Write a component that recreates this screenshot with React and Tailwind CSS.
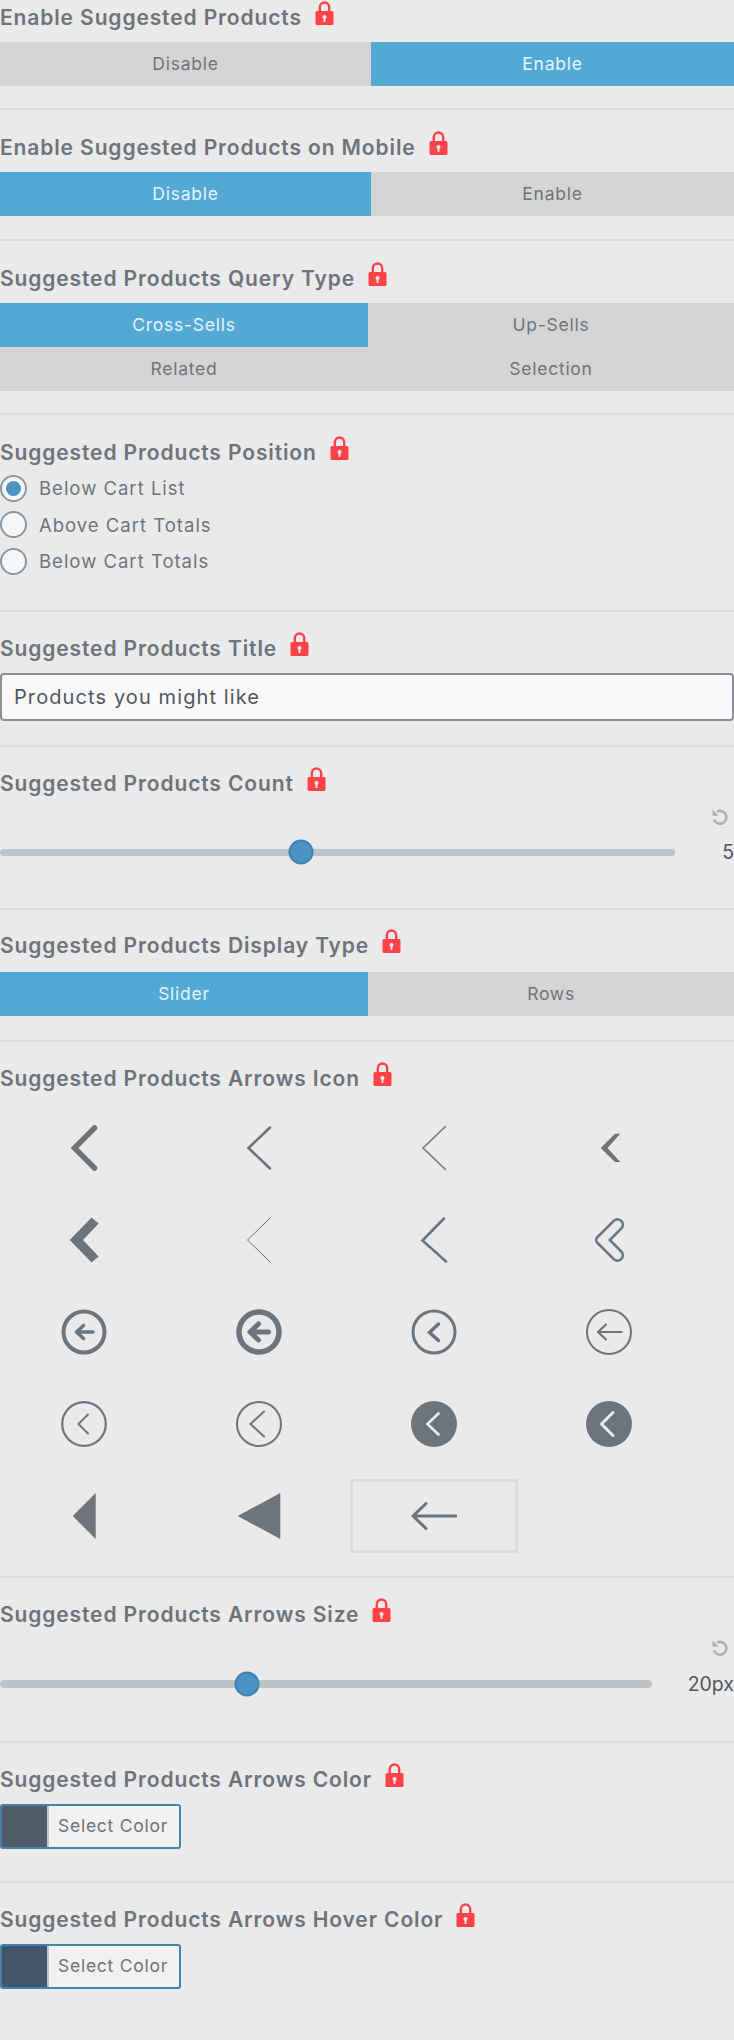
import React from 'react';

const iconColor = '#6d747b';

function Lock() {
  return (
    <svg width="19" height="24" viewBox="0 0 19 24" className="-mt-[5px] ml-[13px] shrink-0">
      <path d="M4.8 11V6.2a4.7 4.7 0 0 1 9.4 0V11" fill="none" stroke="#ff4248" strokeWidth="2.4" />
      <rect x="0.5" y="10" width="18" height="14" rx="1.5" fill="#ff4248" />
      <circle cx="9.5" cy="16" r="2" fill="#eaeaea" />
      <rect x="8.6" y="16" width="1.8" height="5" fill="#eaeaea" />
    </svg>
  );
}

function Title({ children, className = 'mb-3' }) {
  return (
    <div className={`flex items-start h-6 ${className}`}>
      <h3 className="text-[21px] leading-6 font-semibold tracking-[0.88px] text-[#6d747b] whitespace-nowrap">{children}</h3>
      <Lock />
    </div>
  );
}

function Segments({ options, active, cols = 'grid-cols-[371px_1fr]' }) {
  return (
    <div className={`grid ${cols}`}>
      {options.map((o) => (
        <div
          key={o}
          className={`h-11 pt-[1px] flex items-center justify-center text-[17.5px] tracking-[0.75px] ${
            o === active ? 'bg-[#53a8d4] text-[#e6f4fa]' : 'bg-[#d4d4d4] text-[#6d747b]'
          }`}
        >
          {o}
        </div>
      ))}
    </div>
  );
}

function Radio({ label, checked }) {
  return (
    <div className="flex items-center h-[36.5px]">
      <span className="w-[27px] h-[27px] rounded-full border-2 border-[#8c969e] bg-[#f6f6f6] flex items-center justify-center shrink-0">
        {checked && <span className="w-[15px] h-[15px] rounded-full bg-[#4b93c3]" />}
      </span>
      <span className="ml-[12px] pt-[2px] text-[18.5px] tracking-[1px] text-[#6d747b]">{label}</span>
    </div>
  );
}

function ResetIcon() {
  return (
    <svg width="16" height="16" viewBox="0 0 16 16" fill="none">
      <path d="M5 2.6 A6.4 6.4 0 1 1 1.9 10.4" stroke="#b0b0b0" strokeWidth="2.6" />
      <polygon points="0.5,0.5 0.5,6.8 6.8,6.8" fill="#b0b0b0" />
    </svg>
  );
}

function Slider({ trackWidth, thumbLeft, value, trackClass, gapClass }) {
  return (
    <div>
      <div className="flex justify-end h-4 pr-[6px]">
        <ResetIcon />
      </div>
      <div className={`flex items-center justify-between h-7 ${gapClass}`}>
        <div className={`relative rounded-full bg-[#bdc3c7] ${trackClass}`} style={{ width: trackWidth }}>
          <span
            className="absolute top-1/2 -translate-y-1/2 -translate-x-1/2 w-[25px] h-[25px] rounded-full bg-[#4b93c3] border-2 border-[#3f83b3]"
            style={{ left: thumbLeft }}
          />
        </div>
        <span className="text-[19.5px] text-[#50575e] translate-y-[1px]">{value}</span>
      </div>
    </div>
  );
}

function ColorButton({ swatch }) {
  return (
    <div className="flex w-[181px] h-[45px] rounded-[3px] border-2 border-[#4682ab] bg-[#f1f1f1] overflow-hidden">
      <span className={`w-[45px] border-r-2 border-[#c3c4c7] box-content ${swatch}`} />
      <span className="ml-[9px] self-center text-[17.5px] tracking-[0.75px] text-[#6d747b] whitespace-nowrap">Select Color</span>
    </div>
  );
}

function Svg({ children }) {
  return (
    <svg width="46" height="46" viewBox="0 0 46 46" fill="none" stroke={iconColor} strokeLinecap="round" strokeLinejoin="miter">
      {children}
    </svg>
  );
}

const arrowIcons = [
  <path d="M33.5 3 L13.5 23 L33.5 43" strokeWidth="5.5" />,
  <path d="M34 2.5 L12.5 23 L34 43.5" strokeWidth="2.6" />,
  <path d="M34.5 1.5 L12 23 L34.5 44.5" strokeWidth="1.5" />,
  <polygon points="14.7,23 29,8.7 34.3,8.7 21.5,23 34.3,37 29,37" fill={iconColor} stroke="none" />,
  <polygon points="8.7,23 30.5,0.5 37.7,6.5 22,23 37.7,39.5 30.5,45.5" fill={iconColor} stroke="none" />,
  <path d="M34.7 0.5 L11.5 23 L34.7 45.5" strokeWidth="1" strokeLinecap="butt" />,
  <path d="M33 1.5 L11.5 23.5 L35 44.5" strokeWidth="2.6" />,
  <path d="M11.5 20 L28 3.6 a5.4 5.4 0 0 1 7.6 7.6 L23.8 23 L35.6 34.8 a5.4 5.4 0 0 1 -7.6 7.6 L11.5 26 a4.2 4.2 0 0 1 0 -6 Z" strokeWidth="2.5" />,
  <>
    <circle cx="23" cy="23" r="20.5" strokeWidth="4" />
    <path d="M32 23 H16 M22.5 16.5 L15.5 23 L22.5 29.5" strokeWidth="3.5" strokeLinejoin="round" />
  </>,
  <>
    <circle cx="23" cy="23" r="20" strokeWidth="5.5" />
    <path d="M32.5 23 H15 M22.5 15 L14 23 L22.5 31" strokeWidth="5" strokeLinejoin="round" />
  </>,
  <>
    <circle cx="23" cy="23" r="21" strokeWidth="3" />
    <path d="M27.5 15 L18.5 23.5 L27.5 31.5" strokeWidth="3.5" />
  </>,
  <>
    <circle cx="23" cy="23" r="22" strokeWidth="2" />
    <path d="M35.5 23 H12 M20 15.5 L12 23 L20 30.5" strokeWidth="2.2" strokeLinejoin="round" />
  </>,
  <>
    <circle cx="23" cy="23" r="21.8" strokeWidth="2.2" />
    <path d="M27 13.5 L17.5 23 L27 32.5" strokeWidth="2" />
  </>,
  <>
    <circle cx="23" cy="23" r="22" strokeWidth="2" />
    <path d="M28 10.5 L14.5 23 L28 35.5" strokeWidth="2" />
  </>,
  <>
    <circle cx="23" cy="23" r="23" fill={iconColor} stroke="none" />
    <path d="M27.5 12.5 L16.5 23 L27.5 33.5" stroke="#eaeaea" strokeWidth="2.6" />
  </>,
  <>
    <circle cx="23" cy="23" r="23" fill={iconColor} stroke="none" />
    <path d="M27 11.5 L15.5 23 L27 34.5" stroke="#eaeaea" strokeWidth="3" />
  </>,
  <polygon points="11.7,23 34.7,0 34.7,46" fill={iconColor} stroke="none" />,
  <polygon points="1.7,23 44.3,0 44.3,46" fill={iconColor} stroke="none" />,
  <path d="M45 23 H2 M15 10.5 L2 23 L15 35.5" strokeWidth="3" strokeLinejoin="round" />,
];

function ArrowGrid() {
  return (
    <div className="grid grid-cols-[repeat(4,168px)] gap-x-[7px] gap-y-[18px]">
      {arrowIcons.map((icon, i) => (
        <div
          key={i}
          className={`h-[74px] flex items-center justify-center ${i === 18 ? 'border-[3px] border-[#dddddd]' : ''}`}
        >
          <Svg>{icon}</Svg>
        </div>
      ))}
    </div>
  );
}

export default function App() {
  return (
    <div className="w-[734px] h-[2040px] overflow-hidden bg-[#eaeaea] font-['Inter',sans-serif]">
      <section className="pt-[6px] pb-[22px] border-b-2 border-[#dddddd]">
        <Title>Enable Suggested Products</Title>
        <Segments options={['Disable', 'Enable']} active="Enable" />
      </section>

      <section className="pt-[26px] pb-[23px] border-b-2 border-[#dddddd]">
        <Title>Enable Suggested Products on Mobile</Title>
        <Segments options={['Disable', 'Enable']} active="Disable" />
      </section>

      <section className="pt-[26px] pb-[22px] border-b-2 border-[#dddddd]">
        <Title>Suggested Products Query Type</Title>
        <Segments
          options={['Cross-Sells', 'Up-Sells', 'Related', 'Selection']}
          active="Cross-Sells"
          cols="grid-cols-[368px_1fr]"
        />
      </section>

      <section className="pt-[26px] h-[197px] border-b-2 border-[#dddddd]">
        <Title className="mb-[5px]">Suggested Products Position</Title>
        <Radio label="Below Cart List" checked />
        <Radio label="Above Cart Totals" />
        <Radio label="Below Cart Totals" />
      </section>

      <section className="pt-[25px] pb-[24px] border-b-2 border-[#dddddd]">
        <Title>Suggested Products Title</Title>
        <div className="h-12 flex items-center rounded-[4px] border-2 border-[#8c8f94] bg-[#f9f9f9] pl-[12px] text-[20px] tracking-[1.1px] text-[#50575e]">
          Products you might like
        </div>
      </section>

      <section className="pt-[25px] h-[163px] border-b-2 border-[#dddddd]">
        <Title className="mb-[13px]">Suggested Products Count</Title>
        <Slider trackWidth={675} thumbLeft={301} value="5" trackClass="h-[7px]" gapClass="mt-[13px]" />
      </section>

      <section className="pt-[24px] pb-[24px] border-b-2 border-[#dddddd]">
        <Title className="mb-[14px]">Suggested Products Display Type</Title>
        <Segments options={['Slider', 'Rows']} active="Slider" cols="grid-cols-[368px_1fr]" />
      </section>

      <section className="pt-[25px] pb-[23px] border-b-2 border-[#dddddd]">
        <Title className="mb-5">Suggested Products Arrows Icon</Title>
        <ArrowGrid />
      </section>

      <section className="pt-[25px] h-[165px] border-b-2 border-[#dddddd]">
        <Title className="mb-[13px]">Suggested Products Arrows Size</Title>
        <Slider trackWidth={652} thumbLeft={247} value="20px" trackClass="h-2" gapClass="mt-[14px]" />
      </section>

      <section className="pt-[25px] pb-[32px] border-b-2 border-[#dddddd]">
        <Title>Suggested Products Arrows Color</Title>
        <ColorButton swatch="bg-[#4f5d68]" />
      </section>

      <section className="pt-[25px]">
        <Title>Suggested Products Arrows Hover Color</Title>
        <ColorButton swatch="bg-[#43566c]" />
      </section>
    </div>
  );
}
